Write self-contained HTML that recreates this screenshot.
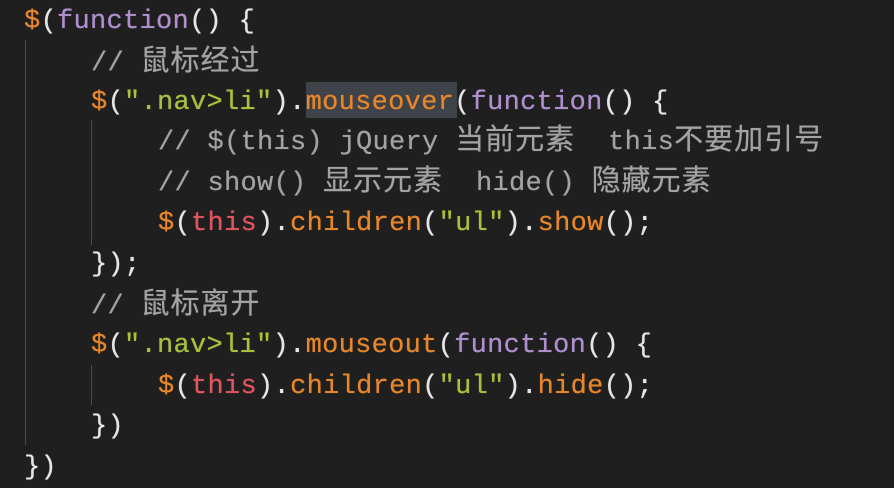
<!DOCTYPE html>
<html><head><meta charset="utf-8"><style>
body{margin:0;width:894px;height:483px;background:#1f1f1f;overflow:hidden;position:relative}
.l{position:absolute;white-space:pre;font-family:"Liberation Mono","Noto Sans CJK SC",monospace;font-size:27px;line-height:40px;color:#e6e6e6;letter-spacing:0.3px;text-shadow:0 0 0.6px currentColor}
.k{font-family:"Noto Sans CJK SC",sans-serif;font-size:29px;letter-spacing:1px}
.o{color:#e8862a}.p{color:#b08fce}.s{color:#a8c23e}.c{color:#a3a3a3}.r{color:#e0555f}.w{color:#e6e6e6}
.g{position:absolute;width:1px;background:#4a4a4a}
.hl{position:absolute;left:306px;top:82px;width:151px;height:36px;background:#3e4249}
</style></head><body>
<div class="hl"></div>
<div class="g" style="left:25px;top:40px;height:405px"></div>
<div class="g" style="left:91px;top:120px;height:125px"></div>
<div class="g" style="left:91px;top:365px;height:40px"></div>
<div class="l" style="left:24px;top:2px"><span class="o">$</span><span class="w">(</span><span class="p">function</span><span class="w">() {</span></div>
<div class="l c" style="left:91px;top:38px">// <span class="k">鼠标经过</span></div>
<div class="l" style="left:91px;top:83px"><span class="o">$</span>(<span class="s">".nav&gt;li"</span>).<span class="o">mouseover</span>(<span class="p">function</span>() {</div>
<div class="l c" style="left:158px;top:117px">// $(this) jQuery <span class="k">当前元素</span>  this<span class="k">不要加引号</span></div>
<div class="l c" style="left:158px;top:158px">// show() <span class="k">显示元素</span>  hide() <span class="k">隐藏元素</span></div>
<div class="l" style="left:158px;top:204px"><span class="o">$</span>(<span class="r">this</span>).<span class="o">children</span>(<span class="s">"ul"</span>).<span class="o">show</span>();</div>
<div class="l" style="left:91px;top:245px">});</div>
<div class="l c" style="left:91px;top:281px">// <span class="k">鼠标离开</span></div>
<div class="l" style="left:91px;top:326px"><span class="o">$</span>(<span class="s">".nav&gt;li"</span>).<span class="o">mouseout</span>(<span class="p">function</span>() {</div>
<div class="l" style="left:158px;top:367px"><span class="o">$</span>(<span class="r">this</span>).<span class="o">children</span>(<span class="s">"ul"</span>).<span class="o">hide</span>();</div>
<div class="l" style="left:91px;top:407px">})</div>
<div class="l" style="left:24px;top:448px">})</div>
</body></html>
